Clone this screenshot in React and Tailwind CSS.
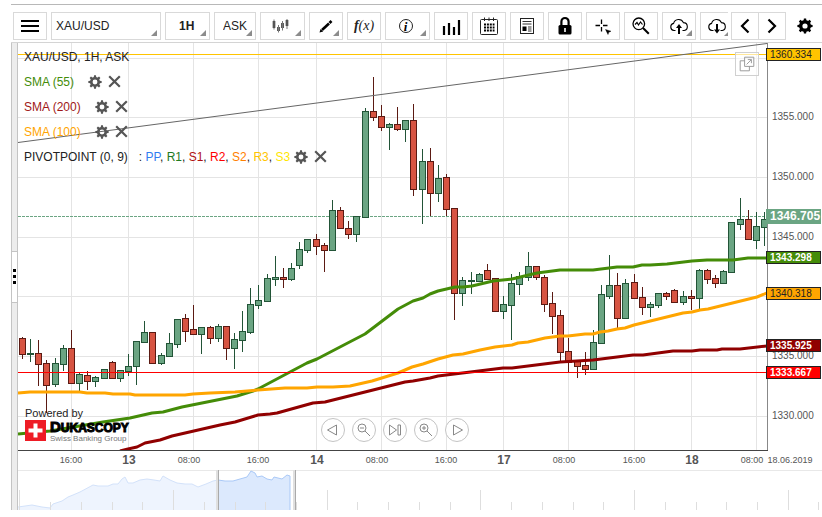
import { useState } from "react";

// Candle: [x, high, bodyTop, bodyBottom, low, isUp]
const candles = [
  [22, 337, 338, 355, 359, 0],
  [30, 339, 353, 355, 362, 1],
  [38, 340, 353, 365, 386, 0],
  [46, 360, 363, 386, 413, 0],
  [55, 358, 363, 385, 387, 1],
  [63, 345, 348, 365, 371, 1],
  [71, 330, 348, 384, 384, 0],
  [79, 372, 374, 384, 391, 1],
  [87, 371, 375, 382, 390, 0],
  [95, 376, 377, 382, 387, 1],
  [104, 369, 369, 379, 379, 1],
  [112, 361, 362, 379, 379, 0],
  [120, 370, 370, 379, 382, 1],
  [128, 354, 366, 372, 376, 1],
  [136, 341, 341, 367, 385, 1],
  [144, 321, 332, 343, 343, 1],
  [152, 332, 332, 364, 364, 0],
  [161, 353, 355, 364, 365, 1],
  [169, 333, 343, 357, 357, 1],
  [177, 319, 319, 345, 348, 1],
  [185, 314, 318, 332, 342, 0],
  [193, 305, 329, 335, 335, 0],
  [201, 327, 327, 335, 354, 1],
  [210, 326, 327, 339, 344, 0],
  [218, 324, 326, 339, 342, 1],
  [226, 326, 326, 349, 360, 0],
  [234, 333, 339, 349, 369, 1],
  [242, 311, 331, 341, 352, 1],
  [250, 288, 304, 333, 334, 1],
  [258, 285, 300, 306, 309, 1],
  [267, 274, 278, 302, 302, 1],
  [275, 256, 277, 280, 286, 1],
  [283, 268, 277, 280, 288, 0],
  [291, 263, 268, 280, 281, 1],
  [299, 242, 249, 266, 269, 1],
  [307, 239, 239, 251, 253, 1],
  [316, 234, 239, 247, 255, 0],
  [324, 243, 245, 251, 272, 0],
  [332, 200, 210, 251, 251, 1],
  [340, 207, 210, 229, 229, 0],
  [348, 221, 228, 235, 239, 0],
  [356, 216, 216, 235, 242, 1],
  [365, 108, 111, 218, 218, 1],
  [373, 77, 111, 118, 121, 0],
  [381, 105, 116, 128, 131, 0],
  [389, 123, 124, 128, 150, 1],
  [397, 107, 124, 130, 131, 0],
  [405, 120, 120, 130, 142, 1],
  [413, 104, 120, 190, 196, 0],
  [422, 149, 161, 190, 224, 1],
  [430, 148, 161, 194, 216, 0],
  [438, 165, 178, 194, 202, 1],
  [446, 174, 177, 210, 216, 0],
  [454, 208, 208, 294, 320, 0],
  [462, 277, 280, 294, 306, 1],
  [471, 272, 280, 282, 294, 1],
  [479, 273, 274, 282, 282, 1],
  [487, 264, 270, 280, 280, 0],
  [495, 278, 278, 312, 312, 0],
  [503, 296, 304, 312, 319, 1],
  [511, 274, 283, 306, 340, 1],
  [519, 272, 276, 285, 295, 1],
  [528, 252, 266, 278, 281, 1],
  [536, 266, 266, 278, 280, 0],
  [544, 275, 277, 305, 312, 0],
  [552, 292, 303, 317, 334, 0],
  [560, 310, 315, 353, 361, 0],
  [568, 338, 351, 363, 372, 0],
  [577, 360, 361, 367, 378, 0],
  [585, 352, 365, 370, 375, 0],
  [593, 330, 342, 370, 370, 1],
  [601, 285, 294, 344, 344, 1],
  [609, 255, 285, 297, 299, 1],
  [617, 273, 285, 319, 328, 0],
  [625, 279, 283, 319, 319, 1],
  [634, 274, 282, 299, 299, 0],
  [642, 287, 297, 308, 315, 0],
  [650, 302, 304, 308, 317, 1],
  [658, 293, 293, 306, 308, 1],
  [666, 292, 293, 297, 300, 0],
  [674, 289, 290, 303, 303, 0],
  [683, 291, 296, 303, 305, 1],
  [691, 290, 296, 299, 310, 0],
  [699, 269, 270, 299, 309, 1],
  [707, 269, 270, 280, 284, 0],
  [715, 275, 278, 284, 288, 0],
  [723, 270, 271, 284, 284, 1],
  [731, 222, 222, 273, 273, 1],
  [740, 198, 219, 225, 230, 1],
  [748, 210, 219, 240, 240, 0],
  [756, 212, 226, 241, 249, 1],
  [764, 212, 219, 228, 246, 1],
];

const sma55 =
  "18,434 50,431 103,422 130,418 152,413 163,412 182,407 207,402 237,396 253,391 258,389 290,372 307,363 317,359 340,347 365,334 398,309 413,301 423,298 430,294 438,291 455,287 463,287 472,286 493,281 512,279 537,273 560,270 593,270 617,267 633,267 642,265 650,265 667,264 692,261 707,260 733,260 748,258 767,258";
const sma100 =
  "18,393 30,392 80,392 87,393 105,393 113,394 130,394 135,395 185,395 193,394 210,393 235,392 258,390 285,388 307,388 317,387 333,387 350,386 372,381 398,373 412,367 423,364 438,359 453,355 463,354 480,350 495,347 512,345 518,343 528,342 545,338 560,336 568,336 585,334 593,334 600,332 608,331 617,329 625,328 634,325 683,313 692,312 700,310 708,309 757,297 767,293";
const sma200 =
  "120,451 128,449 137,447 145,443 160,440 172,436 220,425 235,422 258,415 270,414 277,413 313,403 325,402 405,382 413,381 430,378 438,376 503,368 512,368 560,362 577,361 593,360 633,355 643,355 673,351 692,351 700,350 717,350 722,349 740,349 767,346";

const priceTicks = [
  { y: 58, label: "" },
  { y: 117, label: "1355.000" },
  { y: 177, label: "1350.000" },
  { y: 237, label: "1345.000" },
  { y: 296, label: "" },
  { y: 356, label: "1335.000" },
  { y: 416, label: "1330.000" },
];

const timeTicks = [
  { x: 71, label: "16:00" },
  { x: 128, label: "13", day: true },
  { x: 193, label: "08:00", at: 189 },
  { x: 258, label: "16:00" },
  { x: 316, label: "14", day: true },
  { x: 381, label: "08:00", at: 377 },
  { x: 446, label: "16:00" },
  { x: 503, label: "17", day: true },
  { x: 568, label: "08:00", at: 564 },
  { x: 634, label: "16:00" },
  { x: 691, label: "18", day: true },
  { x: 756, label: "08:00", at: 752 },
];

const priceTags = [
  { y: 48, label: "1360.334", fill: "#ffc400", color: "#222" },
  { y: 251, label: "1343.298", fill: "#448c08", color: "#fff" },
  { y: 287, label: "1340.318", fill: "#ffa500", color: "#222" },
  { y: 339, label: "1335.925", fill: "#900000", color: "#fff" },
  { y: 366, label: "1333.667", fill: "#ff0000", color: "#fff" },
];

const navLeft =
  "18,507 32,505 42,507 50,508 53,504 62,501 68,497 73,495 80,492 93,485 98,486 108,486 113,484 118,484 122,479 125,477 128,483 133,483 140,480 147,479 154,480 160,481 163,476 170,480 177,483 185,484 192,484 198,487 206,484 213,481 218,480";
const navRight =
  "218,480 225,481 233,481 240,479 247,477 251,471 255,473 257,477 262,476 267,479 272,480 274,477 282,479 287,475 290,476";

const navTicks = [19, 50, 81, 112, 142, 173, 204, 235, 265, 296, 327, 357, 388, 419, 450, 480, 511, 542, 573, 603, 634, 665, 696, 726, 757, 788, 818];

const indicators = [
  { name: "SMA (55)", className: "text-[#448c08]" },
  { name: "SMA (200)", className: "text-[#a01818]" },
  { name: "SMA (100)", className: "text-[#ffa500]" },
];

const pivots = [
  { name: "PP", className: "text-[#2f7df0]" },
  { name: "R1", className: "text-[#1f7a1f]" },
  { name: "S1", className: "text-[#b01010]" },
  { name: "R2", className: "text-[#ff0000]" },
  { name: "S2", className: "text-[#ff8000]" },
  { name: "R3", className: "text-[#ffc400]" },
  { name: "S3", className: "text-[#ffe600]" },
];

const teeth = [0, 45, 90, 135, 180, 225, 270, 315];

const Gear = ({ className, ring = 2.2 }) => (
  <svg viewBox="0 0 16 16" className={className} aria-hidden="true">
    {teeth.map((a) => (
      <path
        key={a}
        d="M6.5 3.2 L6.9 0.4 H9.1 L9.5 3.2 Z"
        fill="currentColor"
        transform={`rotate(${a} 8 8)`}
      />
    ))}
    <circle cx="8" cy="8" r="4.3" fill="none" stroke="currentColor" strokeWidth={ring} />
  </svg>
);

const Corner = ({ className = "right-[3px] bottom-[3px]" }) => (
  <svg viewBox="0 0 6 6" className={`pointer-events-none absolute size-1.5 ${className}`} aria-hidden="true">
    <path d="M6 0V6H0Z" fill="#8c8c8c" />
  </svg>
);

const ToolButton = ({ label, wide, menu, children }) => (
  <button
    aria-label={label}
    className={`relative flex h-7 shrink-0 items-center justify-center border border-[#d9d9d9] bg-white text-black hover:bg-gray-50 ${
      wide ? "w-[45px] pr-1" : "w-[34px]"
    }`}
  >
    {children}
    {menu && <Corner />}
  </button>
);

const ToolSelect = ({ label, value, onChange, options, className }) => (
  <div className="relative shrink-0">
    <select
      aria-label={label}
      value={value}
      onChange={(e) => onChange(e.target.value)}
      className={`block h-7 appearance-none border border-[#d9d9d9] bg-white text-xs text-[#222] ${className}`}
    >
      {options.map((o) => (
        <option key={o}>{o}</option>
      ))}
    </select>
    <Corner className="right-1 bottom-1" />
  </div>
);

const Icon = ({ children, className = "size-5" }) => (
  <svg viewBox="0 0 20 20" className={className} fill="none" stroke="currentColor" aria-hidden="true">
    {children}
  </svg>
);

const cloud = "M6.5 14.5H5A3.6 3.6 0 0 1 4.6 7.4A5.2 5.2 0 0 1 14.4 6.6A4 4 0 0 1 15.2 14.5H13.5";

const Toolbar = () => {
  const [symbol, setSymbol] = useState("XAU/USD");
  const [period, setPeriod] = useState("1H");
  const [side, setSide] = useState("ASK");

  return (
    <header className="flex border-t border-b border-t-[#b8b8b8] border-b-[#d4d4d4] pt-[7px] pb-0.5">
      <div className="flex min-w-0 flex-1 gap-1 overflow-hidden pl-0.5">
        <ToolButton label="Menu">
          <Icon>
            <path d="M1 5H19M1 10H19M1 15H19" strokeWidth="2" />
          </Icon>
        </ToolButton>
        <ToolSelect label="Instrument" value={symbol} onChange={setSymbol} options={["XAU/USD", "EUR/USD"]} className="w-[110px] pl-1" />
        <ToolSelect label="Period" value={period} onChange={setPeriod} options={["1H", "4H"]} className="w-[45px] pl-[13px] font-bold" />
        <ToolSelect label="Offer side" value={side} onChange={setSide} options={["ASK", "BID"]} className="w-[42px] pl-2" />

        <ToolButton label="Chart type" wide menu>
          <Icon>
            <path d="M3 5V12M7.5 11V15M11.5 7V12M16 4V10" strokeWidth="2.6" stroke="#333" />
            <path d="M3 3.5V13.5M7.5 9V16.5M11.5 5V14.5M16 3V13" strokeWidth="1" stroke="#777" />
          </Icon>
        </ToolButton>
        <ToolButton label="Draw" menu>
          <Icon>
            <path d="M6 14L13 7.5" strokeWidth="2.6" />
            <path d="M13.5 7L15.5 5" strokeWidth="2.6" />
            <path d="M3.5 16.5L4.6 13L7.2 15.4Z" fill="currentColor" stroke="none" />
          </Icon>
        </ToolButton>
        <ToolButton label="Indicators">
          <span className="font-['Liberation_Serif',serif] text-sm leading-none text-[#222] italic">
            <b>f</b>(x)
          </span>
        </ToolButton>
        <ToolButton label="Info" wide menu>
          <span className="flex size-[14px] items-center justify-center rounded-full border border-[#222] font-['Liberation_Serif',serif] text-[13px] leading-none font-bold italic">
            i
          </span>
        </ToolButton>
        <ToolButton label="Volume">
          <Icon>
            <path d="M3 10V19M8 7V19M13 11V19M18 4V19" strokeWidth="2.2" />
          </Icon>
        </ToolButton>
        <ToolButton label="Calendar">
          <Icon>
            <rect x="1.5" y="3.5" width="17" height="15" rx="1" stroke="#222" />
            <path d="M5.5 1.5V5M10 1.5V5M14.5 1.5V5" stroke="#222" />
            <path d="M5 8.5H15.5M5 11.5H15.5M5 14.5H15.5" strokeWidth="1.8" strokeDasharray="2 .9" />
          </Icon>
        </ToolButton>
        <ToolButton label="News">
          <Icon>
            <rect x="3.5" y="2.5" width="13" height="15" stroke="#222" />
            <path d="M5.5 5.5H14.5M5.5 8H14.5M11 11H14.5M11 13H14.5M11 15H14.5" stroke="#333" />
            <rect x="5.5" y="10.5" width="4" height="4.5" fill="currentColor" stroke="none" />
          </Icon>
        </ToolButton>
        <ToolButton label="Lock">
          <Icon>
            <path d="M6.4 10V5.8a3.6 3.8 0 0 1 7.2 0V10" strokeWidth="2.2" />
            <rect x="3.5" y="9" width="13" height="9.5" rx="1.5" fill="currentColor" stroke="none" />
            <path d="M10 12V16" stroke="#fff" strokeWidth="1.6" />
          </Icon>
        </ToolButton>
        <ToolButton label="Crosshair">
          <Icon>
            <path d="M2.5 9.5H7M10 9.5H14.5M8.5 3.5V8M8.5 11V15.5" strokeWidth="1.3" />
            <path d="M12.5 13.5L18 15.2L15.8 16.2L15 18.5Z" fill="currentColor" strokeWidth=".4" />
          </Icon>
        </ToolButton>
        <ToolButton label="Analyse">
          <Icon>
            <circle cx="7.8" cy="7.8" r="5.8" strokeWidth="1.3" />
            <path d="M4 8.5L6 6.5L7.5 9L9.5 6L11.5 8.5" strokeWidth="1.2" />
            <path d="M12 12L17.8 17.8" strokeWidth="2" />
          </Icon>
        </ToolButton>
        <ToolButton label="Save to cloud" menu>
          <Icon>
            <path d={cloud} strokeWidth="1.1" />
            <path d="M10 18V10" strokeWidth="2" />
            <path d="M7 12L10 8L13 12Z" fill="currentColor" stroke="none" />
          </Icon>
        </ToolButton>
        <ToolButton label="Load from cloud" menu>
          <Icon>
            <path d={cloud} strokeWidth="1.1" />
            <path d="M10 8V15" strokeWidth="2" />
            <path d="M7 13.5L10 17.5L13 13.5Z" fill="currentColor" stroke="none" />
          </Icon>
        </ToolButton>
      </div>

      <div className="ml-[3px] flex shrink-0">
        <button aria-label="Scroll left" className="flex h-7 w-7 items-center justify-center border border-[#d9d9d9]">
          <Icon>
            <path d="M13.5 3.5L7 10L13.5 16.5" strokeWidth="2.2" />
          </Icon>
        </button>
        <button aria-label="Scroll right" className="-ml-px flex h-7 w-7 items-center justify-center border border-[#d9d9d9]">
          <Icon>
            <path d="M6.5 3.5L13 10L6.5 16.5" strokeWidth="2.2" />
          </Icon>
        </button>
        <button aria-label="Settings" className="flex h-7 w-9 items-center justify-center pl-0.5">
          <Gear className="size-4" ring={3.4} />
        </button>
      </div>
    </header>
  );
};

const Chart = () => (
  <svg viewBox="18 43 804 426" className="h-auto w-full font-['Liberation_Sans',sans-serif]" role="img" aria-label="XAU/USD hourly chart">
    <clipPath id="plot">
      <rect x="18" y="43" width="749" height="407" />
    </clipPath>

    {/* Grid */}
    <g fill="#e4e4e4">
      {priceTicks.map((t) => (
        <rect key={t.y} x="18" y={t.y} width="749" height="1" />
      ))}
      {timeTicks.map((t) => (
        <rect key={t.x} x={t.x} y="43" width="1" height="407" />
      ))}
    </g>

    <rect x="18" y="54" width="749" height="1" fill="#ffc400" />
    <path d="M18 216.5H767" stroke="#6ba583" strokeDasharray="3 1" />

    {/* Candles */}
    <g clipPath="url(#plot)" shapeRendering="crispEdges">
      {candles.map(([x, high, top, bottom, low, up]) => (
        <g key={x}>
          <rect x={x} y={high} width="1" height={low - high} fill={up ? "#225437" : "#5b1a13"} />
          <rect x={x - 3} y={top} width="7" height={bottom - top} fill={up ? "#225437" : "#5b1a13"} />
          {bottom - top > 2 && (
            <rect x={x - 2} y={top + 1} width="5" height={bottom - top - 2} fill={up ? "#6ba583" : "#d75442"} />
          )}
        </g>
      ))}
    </g>

    {/* Overlays */}
    <g clipPath="url(#plot)" fill="none" strokeWidth="3" strokeLinejoin="round">
      <polyline points={sma55} stroke="#448c08" />
      <polyline points={sma200} stroke="#900000" />
      <polyline points={sma100} stroke="#ffa500" />
      <path d="M18 142.5L767 43.5" stroke="#666" strokeWidth="1" />
    </g>
    <rect x="18" y="372" width="749" height="1" fill="#ff0000" />

    {/* Axes */}
    <rect x="767" y="43" width="1" height="408" fill="#888" />
    <rect x="18" y="450" width="750" height="1" fill="#444" />
    <g fill="#555" className="text-[10px]">
      {priceTicks.map((t) => (
        <text key={t.y} x="772" y={t.y + 3}>
          {t.label}
        </text>
      ))}
    </g>
    <g fill="#555" textAnchor="middle" className="text-[9px]">
      {timeTicks.map((t) =>
        t.day ? (
          <text key={t.x} x={t.x + 1} y="464" className="text-[12px] font-bold">
            {t.label}
          </text>
        ) : (
          <text key={t.x} x={t.at || t.x} y="463">
            {t.label}
          </text>
        )
      )}
      <text x="790" y="463">
        18.06.2019
      </text>
    </g>

    {/* Price tags */}
    {priceTags.map((t) => (
      <g key={t.label}>
        <rect x="766.5" y={t.y + 0.5} width="54" height="12" fill={t.fill} stroke="#222" />
        <text x="770" y={t.y + 10} fill={t.color} className={t.color === "#fff" ? "text-[10px] font-bold" : "text-[10px]"}>
          {t.label}
        </text>
      </g>
    ))}
    <rect x="766" y="209" width="55" height="15" fill="#6ba583" />
    <text x="770" y="220" fill="#fff" className="text-[12px] font-bold">
      1346.705
    </text>
  </svg>
);

const IndicatorActions = ({ name }) => (
  <>
    <button aria-label={`Settings of ${name}`} className="text-[#555]">
      <Gear className="size-[14px]" ring={3} />
    </button>
    <button aria-label={`Remove ${name}`} className="ml-1.5 text-[#555]">
      <svg viewBox="0 0 13 13" className="size-[13px]" aria-hidden="true">
        <path d="M1.2 1.2L11.8 11.8M11.8 1.2L1.2 11.8" stroke="currentColor" strokeWidth="2.2" />
      </svg>
    </button>
  </>
);

const Legend = () => (
  <div className="absolute top-px left-1.5 text-xs text-[#222]">
    <p className="flex h-[25px] items-center">XAU/USD, 1H, ASK</p>
    {indicators.map((i) => (
      <div key={i.name} className="flex h-[25px] items-center">
        <span className={`mr-3.5 ${i.className}`}>{i.name}</span>
        <IndicatorActions name={i.name} />
      </div>
    ))}
    <div className="flex h-[25px] items-center">
      <span className="mr-[11px]">PIVOTPOINT (0, 9)</span>
      <span className="mr-1">
        :{" "}
        {pivots.map((p, i) => (
          <span key={p.name}>
            {i > 0 && ", "}
            <span className={p.className}>{p.name}</span>
          </span>
        ))}
      </span>
      <IndicatorActions name="PIVOTPOINT" />
    </div>
  </div>
);

const Brand = () => (
  <div className="absolute bottom-[26px] left-[7px] text-[#222]">
    <p className="text-[11px] leading-[13px]">Powered by</p>
    <div className="flex items-start gap-1">
      <svg viewBox="0 0 21 21" className="size-[21px]" aria-hidden="true">
        <rect width="21" height="21" fill="#ee1c25" />
        <path d="M8.5 3.5H12.5V8.5H17.5V12.5H12.5V17.5H8.5V12.5H3.5V8.5H8.5Z" fill="#fff" />
      </svg>
      <div>
        <p className="flex h-[14px] items-baseline text-xs leading-[14px] font-bold text-black [-webkit-text-stroke:1px_black]">
          <span className="text-[15px] leading-[14px]">D</span>
          <span>UKASCOPY</span>
        </p>
        <p className="text-[8px] leading-[9px] whitespace-nowrap text-[#777]">Swiss Banking Group</p>
      </div>
    </div>
  </div>
);

const navButtons = [
  { label: "Back", d: "M13.5 5V15L4.5 10Z" },
  { label: "Zoom out", d: "M12 8A4 4 0 1 1 4 8A4 4 0 1 1 12 8M11 11L16 16M6 8H10" },
  { label: "Latest", d: "M4.5 5V15L11.5 10ZM13 5H15.5V15H13Z" },
  { label: "Zoom in", d: "M12 8A4 4 0 1 1 4 8A4 4 0 1 1 12 8M11 11L16 16M6 8H10M8 6V10" },
  { label: "Forward", d: "M6.5 5V15L15.5 10Z" },
];

const NavButtons = () => (
  <div className="absolute right-[50px] bottom-[27px] left-0 flex justify-center gap-[7px]">
    {navButtons.map((b) => (
      <button
        key={b.label}
        aria-label={b.label}
        className="flex size-6 items-center justify-center rounded-full border border-[#c4c4c4] bg-white text-[#888]"
      >
        <Icon>
          <path d={b.d} />
        </Icon>
      </button>
    ))}
  </div>
);

const Navigator = () => (
  <svg viewBox="18 469 804 41" className="h-auto w-full" role="img" aria-label="History overview">
    <rect x="18" y="470" width="804" height="1" fill="#e8e8e8" />
    <polygon points={`${navLeft} 218,510 18,510`} fill="#eef4fe" />
    <polygon points={`${navRight} 290,510 218,510`} fill="#dce9fd" />
    <polyline points={navLeft} fill="none" stroke="#d3e2fa" />
    <polyline points={`${navRight} 290,510`} fill="none" stroke="#aac9f7" />
    {navTicks.map((x, i) => (
      <rect key={x} x={x} y={i % 5 === 0 ? 490 : 502} width="1" height="20" fill="#dedede" />
    ))}
    <rect x="216" y="470" width="2" height="40" fill="#e0e0e0" />
    <rect x="218" y="470" width="1" height="40" fill="#aaa" />
    <rect x="293" y="470" width="2" height="40" fill="#e0e0e0" />
    <rect x="295" y="470" width="1" height="40" fill="#aaa" />
  </svg>
);

const App = () => {
  return (
    <div className="bg-white pt-1 pl-[11px] font-['Liberation_Sans',Arial,sans-serif]">
      <Toolbar />
      <main className="flex">
        <div className="flex w-[7px] shrink-0 flex-col justify-center border-x border-[#c4c4c4] bg-[#ededed]">
          <button aria-label="Resize panel" className="flex h-[52px] flex-col items-center justify-center gap-[3px] border-y border-[#c4c4c4] bg-white">
            <span className="size-[3px] bg-black" />
            <span className="size-[3px] bg-black" />
            <span className="size-[3px] bg-black" />
          </button>
        </div>

        <div className="min-w-0 flex-1">
          <div className="relative">
            <Chart />
            <Legend />
            <Brand />
            <NavButtons />
            <button
              aria-label="Open in new window"
              className="absolute top-[9px] right-[63px] flex size-6 items-center justify-center border border-[#d0d0d0] bg-white/60 text-[#999]"
            >
              <Icon className="size-4">
                <path d="M7 1.5H18.5V13H7ZM7 6H1.5V18.5H13V13M9.5 10.5L15.5 4.5M11 4.5H15.5V9" strokeWidth="1.2" />
              </Icon>
            </button>
          </div>
          <Navigator />
        </div>
      </main>
    </div>
  );
};

export default App;
